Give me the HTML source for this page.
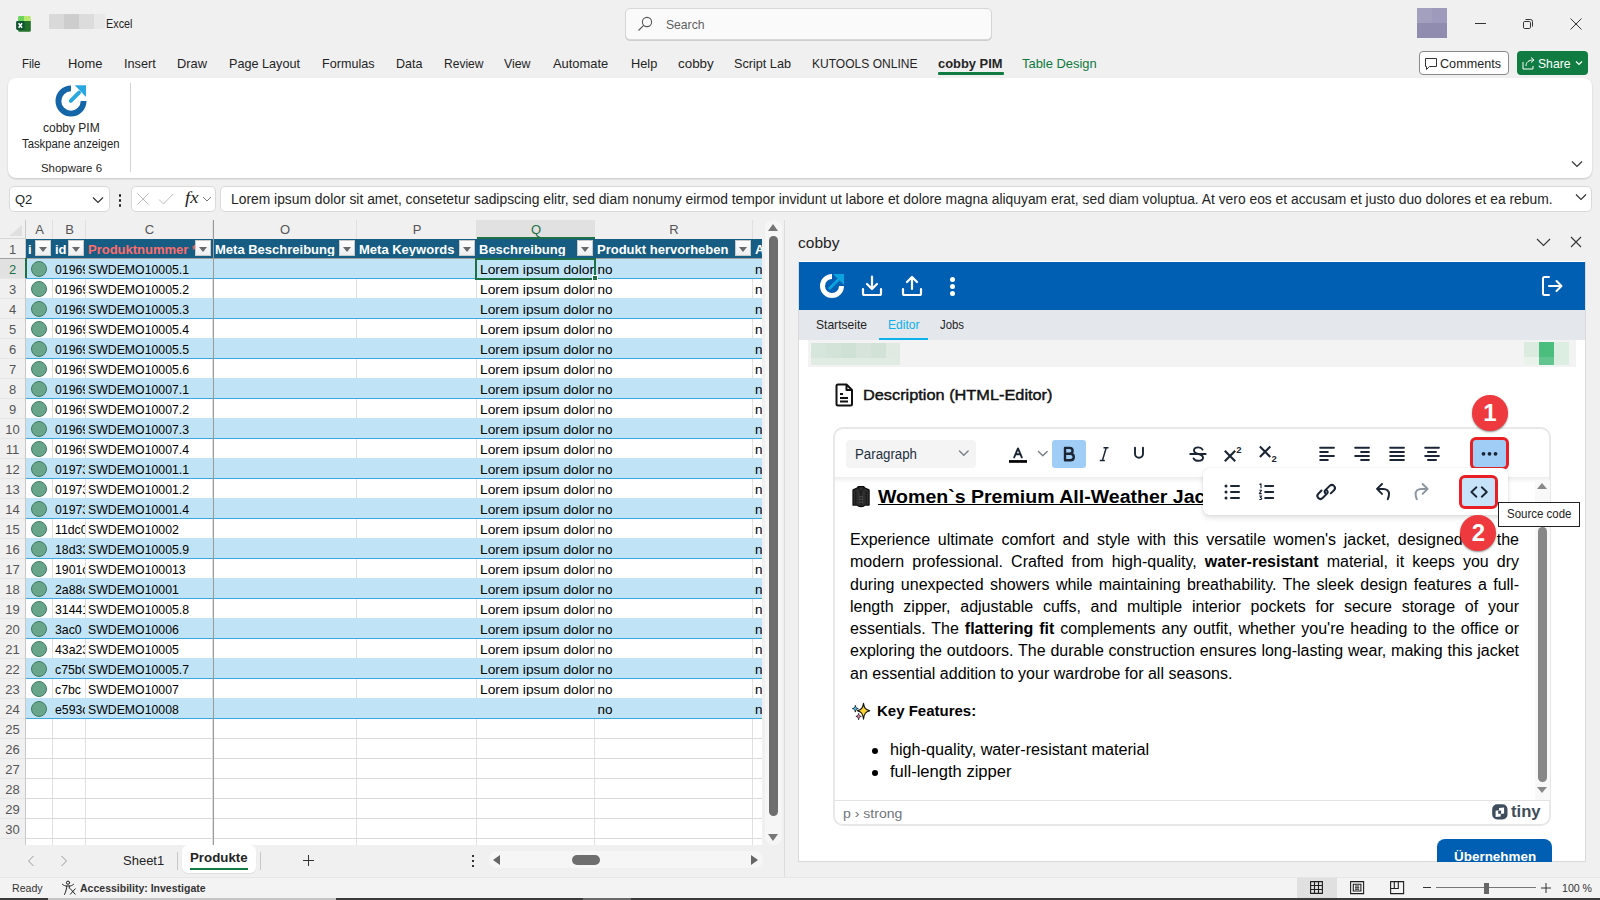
<!DOCTYPE html>
<html><head><meta charset="utf-8">
<style>
*{box-sizing:border-box;margin:0;padding:0}
html,body{width:1600px;height:900px;overflow:hidden;background:#f0f0f0;font-family:"Liberation Sans",sans-serif;color:#242424}
.a{position:absolute}
.t{position:absolute;white-space:nowrap;line-height:1;transform-origin:0 0;transform:scaleX(var(--k,1))}
</style></head><body>
<!-- TITLE BAR -->
<div id="title">
  <svg class="a" style="left:0;top:0" width="40" height="40" viewBox="0 0 40 40"><path d="M18.1 17.3a1.4 1.4 0 0 1 1.4-1.4H24v5H18.1z" fill="#6bd35e"/><path d="M24 15.9h5.4a1.4 1.4 0 0 1 1.4 1.4v3.6H24z" fill="#b8e86c"/><path d="M18.1 20.9h12.7v9.5a1.4 1.4 0 0 1-1.4 1.4h-9.9a1.4 1.4 0 0 1-1.4-1.4z" fill="#21712b"/><rect x="16.1" y="20.9" width="8.5" height="9" rx="1.3" fill="#0f5532"/><path d="M18.6 23.2l3.5 4.6M22.1 23.2l-3.5 4.6" stroke="#fff" stroke-width="1.5"/></svg>
  <div class="a" style="left:49px;top:14px;width:15px;height:15px;background:#d9d9d9"></div>
  <div class="a" style="left:64px;top:14px;width:15px;height:15px;background:#cdcdcd"></div>
  <div class="a" style="left:79px;top:14px;width:15px;height:15px;background:#dcdcdc"></div>
  <div class="a" style="left:94px;top:14px;width:11px;height:15px;background:#e8e8e8"></div>
  <div class="t" style="left:106px;top:18px;font-size:12.5px;--k:0.8666">Excel</div>
  <div class="a" style="left:625px;top:8px;width:367px;height:32px;background:#fafafa;border:1px solid #d6d6d6;border-radius:5px;box-shadow:0 1px 0 #cfcfcf"></div>
  <svg class="a" style="left:637px;top:16px" width="16" height="16" viewBox="0 0 16 16"><circle cx="10" cy="6" r="4.6" fill="none" stroke="#555" stroke-width="1.1"/><line x1="6.7" y1="9.3" x2="1.5" y2="14.5" stroke="#555" stroke-width="1.1"/></svg>
  <div class="t" style="left:666px;top:18px;font-size:13px;color:#5f5f5f;--k:0.9344">Search</div>
  <div class="a" style="left:1417px;top:8px;width:15px;height:15px;background:#a39fbf"></div>
  <div class="a" style="left:1432px;top:8px;width:15px;height:15px;background:#9e9abb"></div>
  <div class="a" style="left:1417px;top:23px;width:30px;height:15px;background:#908cb0"></div>
  <div class="a" style="left:1475px;top:23px;width:11px;height:1px;background:#333"></div>
  <svg class="a" style="left:1521px;top:17px" width="14" height="14" viewBox="0 0 14 14"><rect x="2.5" y="4.5" width="7" height="7" rx="1.2" fill="none" stroke="#333" stroke-width="1"/><path d="M4.5 2.5h5a2 2 0 0 1 2 2v5" fill="none" stroke="#333" stroke-width="1"/></svg>
  <svg class="a" style="left:1569px;top:17px" width="14" height="14" viewBox="0 0 14 14"><path d="M1.5 1.5l11 11M12.5 1.5l-11 11" stroke="#333" stroke-width="1"/></svg>
</div>

<!-- TABS -->
<div id="tabs">
  <div class="t" style="left:22px;top:57px;font-size:13px;--k:0.8829">File</div>
  <div class="t" style="left:68px;top:57px;font-size:13px;--k:0.9946">Home</div>
  <div class="t" style="left:124px;top:57px;font-size:13px;--k:0.9765">Insert</div>
  <div class="t" style="left:177px;top:57px;font-size:13px;--k:0.9887">Draw</div>
  <div class="t" style="left:229px;top:57px;font-size:13px;--k:0.9724">Page Layout</div>
  <div class="t" style="left:322px;top:57px;font-size:13px;--k:0.9689">Formulas</div>
  <div class="t" style="left:396px;top:57px;font-size:13px;--k:0.9647">Data</div>
  <div class="t" style="left:444px;top:57px;font-size:13px;--k:0.9267">Review</div>
  <div class="t" style="left:504px;top:57px;font-size:13px;--k:0.9480">View</div>
  <div class="t" style="left:553px;top:57px;font-size:13px;--k:0.9927">Automate</div>
  <div class="t" style="left:631px;top:57px;font-size:13px;--k:0.9813">Help</div>
  <div class="t" style="left:678px;top:57px;font-size:13px;--k:1.0302">cobby</div>
  <div class="t" style="left:734px;top:57px;font-size:13px;--k:0.9736">Script Lab</div>
  <div class="t" style="left:812px;top:57px;font-size:13px;--k:0.9262">KUTOOLS ONLINE</div>
  <div class="t" style="left:938px;top:57px;font-size:13px;font-weight:bold;--k:0.9921">cobby PIM</div>
  <div class="a" style="left:938px;top:72px;width:66px;height:3px;background:#107c41;border-radius:1px"></div>
  <div class="t" style="left:1022px;top:57px;font-size:13px;color:#0e7a3c;--k:0.9946">Table Design</div>
  <div class="a" style="left:1419px;top:51px;width:90px;height:24px;border:1px solid #8a8a8a;border-radius:4px;background:#fff"></div>
  <svg class="a" style="left:1424px;top:57px" width="14" height="14" viewBox="0 0 14 14"><path d="M1.5 1.5h11v8h-7l-3 3v-3h-1z" fill="none" stroke="#333" stroke-width="1"/></svg>
  <div class="t" style="left:1440px;top:57px;font-size:13px;--k:0.9704">Comments</div>
  <div class="a" style="left:1517px;top:51px;width:71px;height:24px;border-radius:4px;background:#107c41"></div>
  <svg class="a" style="left:1521px;top:56px" width="15" height="15" viewBox="0 0 15 15"><path d="M2 6v7h10v-3" fill="none" stroke="#fff" stroke-width="1"/><path d="M5 10c0-4 3-6 7-6M10 1.5l3 2.5-3 2.5" fill="none" stroke="#fff" stroke-width="1"/></svg>
  <div class="t" style="left:1538px;top:57px;font-size:13px;color:#fff;--k:0.9365">Share</div>
  <svg class="a" style="left:1575px;top:60px" width="8" height="6" viewBox="0 0 8 6"><path d="M1 1.5l3 3 3-3" fill="none" stroke="#fff" stroke-width="1.2"/></svg>
</div>

<!-- RIBBON BODY -->
<div class="a" style="left:8px;top:78px;width:1584px;height:100px;background:#fff;border-radius:8px;box-shadow:0 1px 2px rgba(0,0,0,.18)"></div>
<div class="a" style="left:130px;top:83px;width:1px;height:89px;background:#d2d2d2"></div>
<svg class="a" style="left:54px;top:84px" width="34" height="34" viewBox="0 0 34 34">
  <path d="M17 4.4 A12.6 12.6 0 1 0 29.6 17" fill="none" stroke="#1565a9" stroke-width="5.8"/>
  <path d="M16.8 16.8 L25 8.6" stroke="#29a7e1" stroke-width="4" stroke-linecap="round"/>
  <path d="M20.8 1.3 H32 V13 Z" fill="#29a7e1"/>
</svg>
<div class="t" style="left:43px;top:122px;font-size:12px">cobby PIM</div>
<div class="t" style="left:22px;top:138px;font-size:12px;--k:0.9427">Taskpane anzeigen</div>
<div class="t" style="left:41px;top:163px;font-size:11px;--k:1.0389">Shopware 6</div>
<svg class="a" style="left:1571px;top:159px" width="12" height="10" viewBox="0 0 12 10"><path d="M1 2.5l5 5 5-5" fill="none" stroke="#333" stroke-width="1.2"/></svg>

<!-- FORMULA BAR -->
<div class="a" style="left:9px;top:186px;width:101px;height:26px;background:#fff;border:1px solid #d9d9d9;border-radius:5px"></div>
<div class="t" style="left:15px;top:193px;font-size:13px">Q2</div>
<svg class="a" style="left:92px;top:195px" width="12" height="10" viewBox="0 0 12 10"><path d="M1 2.5l5 5 5-5" fill="none" stroke="#333" stroke-width="1.2"/></svg>
<div class="a" style="left:118.8px;top:194px;width:2.6px;height:2.6px;background:#222;border-radius:50%"></div>
<div class="a" style="left:118.8px;top:199px;width:2.6px;height:2.6px;background:#222;border-radius:50%"></div>
<div class="a" style="left:118.8px;top:204px;width:2.6px;height:2.6px;background:#222;border-radius:50%"></div>
<div class="a" style="left:131px;top:186px;width:85px;height:26px;background:#fff;border:1px solid #d9d9d9;border-radius:5px"></div>
<svg class="a" style="left:136px;top:192px" width="14" height="14" viewBox="0 0 14 14"><path d="M1.5 1.5l11 11M12.5 1.5l-11 11" stroke="#bdbdbd" stroke-width="1"/></svg>
<svg class="a" style="left:158px;top:192px" width="16" height="14" viewBox="0 0 16 14"><path d="M1 7.5l4.5 4.5L15 2" fill="none" stroke="#bdbdbd" stroke-width="1"/></svg>
<div class="t" style="left:184.5px;top:189px;font-size:17.5px;font-family:'Liberation Serif',serif;font-style:italic;color:#222;--k:1.0680">fx</div>
<svg class="a" style="left:202px;top:195px" width="10" height="8" viewBox="0 0 10 8"><path d="M1 2l4 4 4-4" fill="none" stroke="#777" stroke-width="1"/></svg>
<div class="a" style="left:220px;top:186px;width:1372px;height:26px;background:#fff;border:1px solid #d9d9d9;border-radius:5px"></div>
<div class="t" style="left:231px;top:192px;font-size:14px;--k:0.9885">Lorem ipsum dolor sit amet, consetetur sadipscing elitr, sed diam nonumy eirmod tempor invidunt ut labore et dolore magna aliquyam erat, sed diam voluptua. At vero eos et accusam et justo duo dolores et ea rebum.</div>
<svg class="a" style="left:1575px;top:192px" width="12" height="10" viewBox="0 0 12 10"><path d="M1 2.5l5 5 5-5" fill="none" stroke="#333" stroke-width="1.2"/></svg>


<div class="a" style="left:0;top:220px;width:762px;height:625px;overflow:hidden;background:#fff">
<div class="a" style="left:0;top:0;width:762px;height:19px;background:#f0f0f0"></div>
<div class="a" style="left:0;top:0;width:25px;height:625px;background:#f0f0f0"></div>
<svg class="a" style="left:9px;top:5px" width="13" height="11" viewBox="0 0 13 11"><path d="M13 0V11H0Z" fill="#e0e0e0"/></svg>
<div class="a" style="left:26px;top:0;width:27px;height:19px;background:transparent;border-right:1px solid #e0e0e0"></div>
<div class="t" style="left:26px;top:3px;width:27px;text-align:center;font-size:13px;color:#555">A</div>
<div class="a" style="left:53px;top:0;width:33px;height:19px;background:transparent;border-right:1px solid #e0e0e0"></div>
<div class="t" style="left:53px;top:3px;width:33px;text-align:center;font-size:13px;color:#555">B</div>
<div class="a" style="left:86px;top:0;width:127px;height:19px;background:transparent;border-right:1px solid #e0e0e0"></div>
<div class="t" style="left:86px;top:3px;width:127px;text-align:center;font-size:13px;color:#555">C</div>
<div class="a" style="left:213px;top:0;width:144px;height:19px;background:transparent;border-right:1px solid #e0e0e0"></div>
<div class="t" style="left:213px;top:3px;width:144px;text-align:center;font-size:13px;color:#555">O</div>
<div class="a" style="left:357px;top:0;width:120px;height:19px;background:transparent;border-right:1px solid #e0e0e0"></div>
<div class="t" style="left:357px;top:3px;width:120px;text-align:center;font-size:13px;color:#555">P</div>
<div class="a" style="left:477px;top:0;width:118px;height:19px;background:#e1e1e1;border-right:1px solid #e0e0e0"></div>
<div class="t" style="left:477px;top:3px;width:118px;text-align:center;font-size:13px;color:#1e7145">Q</div>
<div class="a" style="left:595px;top:0;width:158px;height:19px;background:transparent;border-right:1px solid #e0e0e0"></div>
<div class="t" style="left:595px;top:3px;width:158px;text-align:center;font-size:13px;color:#555">R</div>
<div class="a" style="left:753px;top:0;width:77px;height:19px;background:transparent;border-right:1px solid #e0e0e0"></div>
<div class="t" style="left:753px;top:3px;width:77px;text-align:center;font-size:13px;color:#555"></div>
<div class="a" style="left:477px;top:17px;width:118px;height:2px;background:#1e7145"></div>
<div class="a" style="left:0;top:18px;width:25px;height:1px;background:#d8d8d8"></div>
<div class="a" style="left:0;top:19px;width:25px;height:20px;background:#f0f0f0;border-bottom:1px solid #e6e6e6"></div>
<div class="t" style="left:0;top:23px;width:25px;text-align:center;font-size:13px;color:#555">1</div>
<div class="a" style="left:0;top:39px;width:25px;height:20px;background:#e1e1e1;border-bottom:1px solid #e6e6e6"></div>
<div class="t" style="left:0;top:43px;width:25px;text-align:center;font-size:13px;color:#1e7145">2</div>
<div class="a" style="left:0;top:59px;width:25px;height:20px;background:#f0f0f0;border-bottom:1px solid #e6e6e6"></div>
<div class="t" style="left:0;top:63px;width:25px;text-align:center;font-size:13px;color:#555">3</div>
<div class="a" style="left:0;top:79px;width:25px;height:20px;background:#f0f0f0;border-bottom:1px solid #e6e6e6"></div>
<div class="t" style="left:0;top:83px;width:25px;text-align:center;font-size:13px;color:#555">4</div>
<div class="a" style="left:0;top:99px;width:25px;height:20px;background:#f0f0f0;border-bottom:1px solid #e6e6e6"></div>
<div class="t" style="left:0;top:103px;width:25px;text-align:center;font-size:13px;color:#555">5</div>
<div class="a" style="left:0;top:119px;width:25px;height:20px;background:#f0f0f0;border-bottom:1px solid #e6e6e6"></div>
<div class="t" style="left:0;top:123px;width:25px;text-align:center;font-size:13px;color:#555">6</div>
<div class="a" style="left:0;top:139px;width:25px;height:20px;background:#f0f0f0;border-bottom:1px solid #e6e6e6"></div>
<div class="t" style="left:0;top:143px;width:25px;text-align:center;font-size:13px;color:#555">7</div>
<div class="a" style="left:0;top:159px;width:25px;height:20px;background:#f0f0f0;border-bottom:1px solid #e6e6e6"></div>
<div class="t" style="left:0;top:163px;width:25px;text-align:center;font-size:13px;color:#555">8</div>
<div class="a" style="left:0;top:179px;width:25px;height:20px;background:#f0f0f0;border-bottom:1px solid #e6e6e6"></div>
<div class="t" style="left:0;top:183px;width:25px;text-align:center;font-size:13px;color:#555">9</div>
<div class="a" style="left:0;top:199px;width:25px;height:20px;background:#f0f0f0;border-bottom:1px solid #e6e6e6"></div>
<div class="t" style="left:0;top:203px;width:25px;text-align:center;font-size:13px;color:#555">10</div>
<div class="a" style="left:0;top:219px;width:25px;height:20px;background:#f0f0f0;border-bottom:1px solid #e6e6e6"></div>
<div class="t" style="left:0;top:223px;width:25px;text-align:center;font-size:13px;color:#555">11</div>
<div class="a" style="left:0;top:239px;width:25px;height:20px;background:#f0f0f0;border-bottom:1px solid #e6e6e6"></div>
<div class="t" style="left:0;top:243px;width:25px;text-align:center;font-size:13px;color:#555">12</div>
<div class="a" style="left:0;top:259px;width:25px;height:20px;background:#f0f0f0;border-bottom:1px solid #e6e6e6"></div>
<div class="t" style="left:0;top:263px;width:25px;text-align:center;font-size:13px;color:#555">13</div>
<div class="a" style="left:0;top:279px;width:25px;height:20px;background:#f0f0f0;border-bottom:1px solid #e6e6e6"></div>
<div class="t" style="left:0;top:283px;width:25px;text-align:center;font-size:13px;color:#555">14</div>
<div class="a" style="left:0;top:299px;width:25px;height:20px;background:#f0f0f0;border-bottom:1px solid #e6e6e6"></div>
<div class="t" style="left:0;top:303px;width:25px;text-align:center;font-size:13px;color:#555">15</div>
<div class="a" style="left:0;top:319px;width:25px;height:20px;background:#f0f0f0;border-bottom:1px solid #e6e6e6"></div>
<div class="t" style="left:0;top:323px;width:25px;text-align:center;font-size:13px;color:#555">16</div>
<div class="a" style="left:0;top:339px;width:25px;height:20px;background:#f0f0f0;border-bottom:1px solid #e6e6e6"></div>
<div class="t" style="left:0;top:343px;width:25px;text-align:center;font-size:13px;color:#555">17</div>
<div class="a" style="left:0;top:359px;width:25px;height:20px;background:#f0f0f0;border-bottom:1px solid #e6e6e6"></div>
<div class="t" style="left:0;top:363px;width:25px;text-align:center;font-size:13px;color:#555">18</div>
<div class="a" style="left:0;top:379px;width:25px;height:20px;background:#f0f0f0;border-bottom:1px solid #e6e6e6"></div>
<div class="t" style="left:0;top:383px;width:25px;text-align:center;font-size:13px;color:#555">19</div>
<div class="a" style="left:0;top:399px;width:25px;height:20px;background:#f0f0f0;border-bottom:1px solid #e6e6e6"></div>
<div class="t" style="left:0;top:403px;width:25px;text-align:center;font-size:13px;color:#555">20</div>
<div class="a" style="left:0;top:419px;width:25px;height:20px;background:#f0f0f0;border-bottom:1px solid #e6e6e6"></div>
<div class="t" style="left:0;top:423px;width:25px;text-align:center;font-size:13px;color:#555">21</div>
<div class="a" style="left:0;top:439px;width:25px;height:20px;background:#f0f0f0;border-bottom:1px solid #e6e6e6"></div>
<div class="t" style="left:0;top:443px;width:25px;text-align:center;font-size:13px;color:#555">22</div>
<div class="a" style="left:0;top:459px;width:25px;height:20px;background:#f0f0f0;border-bottom:1px solid #e6e6e6"></div>
<div class="t" style="left:0;top:463px;width:25px;text-align:center;font-size:13px;color:#555">23</div>
<div class="a" style="left:0;top:479px;width:25px;height:20px;background:#f0f0f0;border-bottom:1px solid #e6e6e6"></div>
<div class="t" style="left:0;top:483px;width:25px;text-align:center;font-size:13px;color:#555">24</div>
<div class="a" style="left:0;top:499px;width:25px;height:20px;background:#f0f0f0;border-bottom:1px solid #e6e6e6"></div>
<div class="t" style="left:0;top:503px;width:25px;text-align:center;font-size:13px;color:#555">25</div>
<div class="a" style="left:0;top:519px;width:25px;height:20px;background:#f0f0f0;border-bottom:1px solid #e6e6e6"></div>
<div class="t" style="left:0;top:523px;width:25px;text-align:center;font-size:13px;color:#555">26</div>
<div class="a" style="left:0;top:539px;width:25px;height:20px;background:#f0f0f0;border-bottom:1px solid #e6e6e6"></div>
<div class="t" style="left:0;top:543px;width:25px;text-align:center;font-size:13px;color:#555">27</div>
<div class="a" style="left:0;top:559px;width:25px;height:20px;background:#f0f0f0;border-bottom:1px solid #e6e6e6"></div>
<div class="t" style="left:0;top:563px;width:25px;text-align:center;font-size:13px;color:#555">28</div>
<div class="a" style="left:0;top:579px;width:25px;height:20px;background:#f0f0f0;border-bottom:1px solid #e6e6e6"></div>
<div class="t" style="left:0;top:583px;width:25px;text-align:center;font-size:13px;color:#555">29</div>
<div class="a" style="left:0;top:599px;width:25px;height:20px;background:#f0f0f0;border-bottom:1px solid #e6e6e6"></div>
<div class="t" style="left:0;top:603px;width:25px;text-align:center;font-size:13px;color:#555">30</div>
<div class="a" style="left:0;top:619px;width:25px;height:20px;background:#f0f0f0;border-bottom:1px solid #e6e6e6"></div>
<div class="t" style="left:0;top:623px;width:25px;text-align:center;font-size:13px;color:#555">31</div>
<div class="a" style="left:52px;top:19px;width:1px;height:625px;background:#e0e0e0"></div>
<div class="a" style="left:85px;top:19px;width:1px;height:625px;background:#e0e0e0"></div>
<div class="a" style="left:212px;top:19px;width:1px;height:625px;background:#e0e0e0"></div>
<div class="a" style="left:356px;top:19px;width:1px;height:625px;background:#e0e0e0"></div>
<div class="a" style="left:476px;top:19px;width:1px;height:625px;background:#e0e0e0"></div>
<div class="a" style="left:594px;top:19px;width:1px;height:625px;background:#e0e0e0"></div>
<div class="a" style="left:752px;top:19px;width:1px;height:625px;background:#e0e0e0"></div>
<div class="a" style="left:26px;top:19px;width:736px;height:19px;background:#175d83"></div>
<div class="a" style="left:26px;top:38px;width:736px;height:20px;background:#c0e4f5"></div>
<div class="a" style="left:26px;top:58px;width:736px;height:1px;background:#3fa6df"></div>
<div class="a" style="left:26px;top:78px;width:736px;height:1px;background:#3fa6df"></div>
<div class="a" style="left:26px;top:78px;width:736px;height:20px;background:#c0e4f5"></div>
<div class="a" style="left:26px;top:98px;width:736px;height:1px;background:#3fa6df"></div>
<div class="a" style="left:26px;top:118px;width:736px;height:1px;background:#3fa6df"></div>
<div class="a" style="left:26px;top:118px;width:736px;height:20px;background:#c0e4f5"></div>
<div class="a" style="left:26px;top:138px;width:736px;height:1px;background:#3fa6df"></div>
<div class="a" style="left:26px;top:158px;width:736px;height:1px;background:#3fa6df"></div>
<div class="a" style="left:26px;top:158px;width:736px;height:20px;background:#c0e4f5"></div>
<div class="a" style="left:26px;top:178px;width:736px;height:1px;background:#3fa6df"></div>
<div class="a" style="left:26px;top:198px;width:736px;height:1px;background:#3fa6df"></div>
<div class="a" style="left:26px;top:198px;width:736px;height:20px;background:#c0e4f5"></div>
<div class="a" style="left:26px;top:218px;width:736px;height:1px;background:#3fa6df"></div>
<div class="a" style="left:26px;top:238px;width:736px;height:1px;background:#3fa6df"></div>
<div class="a" style="left:26px;top:238px;width:736px;height:20px;background:#c0e4f5"></div>
<div class="a" style="left:26px;top:258px;width:736px;height:1px;background:#3fa6df"></div>
<div class="a" style="left:26px;top:278px;width:736px;height:1px;background:#3fa6df"></div>
<div class="a" style="left:26px;top:278px;width:736px;height:20px;background:#c0e4f5"></div>
<div class="a" style="left:26px;top:298px;width:736px;height:1px;background:#3fa6df"></div>
<div class="a" style="left:26px;top:318px;width:736px;height:1px;background:#3fa6df"></div>
<div class="a" style="left:26px;top:318px;width:736px;height:20px;background:#c0e4f5"></div>
<div class="a" style="left:26px;top:338px;width:736px;height:1px;background:#3fa6df"></div>
<div class="a" style="left:26px;top:358px;width:736px;height:1px;background:#3fa6df"></div>
<div class="a" style="left:26px;top:358px;width:736px;height:20px;background:#c0e4f5"></div>
<div class="a" style="left:26px;top:378px;width:736px;height:1px;background:#3fa6df"></div>
<div class="a" style="left:26px;top:398px;width:736px;height:1px;background:#3fa6df"></div>
<div class="a" style="left:26px;top:398px;width:736px;height:20px;background:#c0e4f5"></div>
<div class="a" style="left:26px;top:418px;width:736px;height:1px;background:#3fa6df"></div>
<div class="a" style="left:26px;top:438px;width:736px;height:1px;background:#3fa6df"></div>
<div class="a" style="left:26px;top:438px;width:736px;height:20px;background:#c0e4f5"></div>
<div class="a" style="left:26px;top:458px;width:736px;height:1px;background:#3fa6df"></div>
<div class="a" style="left:26px;top:478px;width:736px;height:1px;background:#3fa6df"></div>
<div class="a" style="left:26px;top:478px;width:736px;height:20px;background:#c0e4f5"></div>
<div class="a" style="left:26px;top:498px;width:736px;height:1px;background:#3fa6df"></div>
<div class="a" style="left:26px;top:518px;width:736px;height:1px;background:#dadada"></div>
<div class="a" style="left:26px;top:538px;width:736px;height:1px;background:#dadada"></div>
<div class="a" style="left:26px;top:558px;width:736px;height:1px;background:#dadada"></div>
<div class="a" style="left:26px;top:578px;width:736px;height:1px;background:#dadada"></div>
<div class="a" style="left:26px;top:598px;width:736px;height:1px;background:#dadada"></div>
<div class="a" style="left:26px;top:618px;width:736px;height:1px;background:#dadada"></div>
<div class="a" style="left:26px;top:638px;width:736px;height:1px;background:#dadada"></div>
<div class="a" style="left:25px;top:0;width:1px;height:625px;background:#c8c8c8"></div>
<div class="a" style="left:213px;top:0;width:1px;height:625px;background:#9a9a9a"></div>
<div class="a" style="left:0;top:38px;width:762px;height:1px;background:#a0a0a0"></div>
<div class="t" style="left:28px;top:23px;width:7px;overflow:hidden;font-size:13px;font-weight:bold;color:#fff">i</div>
<div class="a" style="left:35px;top:20px;width:16px;height:16px;background:linear-gradient(#fff,#eceef0);border:1px solid #c9c9c9"></div>
<svg class="a" style="left:39px;top:27px" width="8" height="5" viewBox="0 0 8 5"><path d="M0 0h8L4 5z" fill="#6a6a6a"/></svg>
<div class="t" style="left:55px;top:23px;width:13px;overflow:hidden;font-size:13px;font-weight:bold;color:#fff">id</div>
<div class="a" style="left:68px;top:20px;width:16px;height:16px;background:linear-gradient(#fff,#eceef0);border:1px solid #c9c9c9"></div>
<svg class="a" style="left:72px;top:27px" width="8" height="5" viewBox="0 0 8 5"><path d="M0 0h8L4 5z" fill="#6a6a6a"/></svg>
<div class="t" style="left:88px;top:23px;width:107px;overflow:hidden;font-size:13px;font-weight:bold;color:#ff6b6b">Produktnummer *</div>
<div class="a" style="left:195px;top:20px;width:16px;height:16px;background:linear-gradient(#fff,#eceef0);border:1px solid #c9c9c9"></div>
<svg class="a" style="left:199px;top:27px" width="8" height="5" viewBox="0 0 8 5"><path d="M0 0h8L4 5z" fill="#6a6a6a"/></svg>
<div class="t" style="left:215px;top:23px;width:124px;overflow:hidden;font-size:13px;font-weight:bold;color:#fff">Meta Beschreibung</div>
<div class="a" style="left:339px;top:20px;width:16px;height:16px;background:linear-gradient(#fff,#eceef0);border:1px solid #c9c9c9"></div>
<svg class="a" style="left:343px;top:27px" width="8" height="5" viewBox="0 0 8 5"><path d="M0 0h8L4 5z" fill="#6a6a6a"/></svg>
<div class="t" style="left:359px;top:23px;width:100px;overflow:hidden;font-size:13px;font-weight:bold;color:#fff">Meta Keywords</div>
<div class="a" style="left:459px;top:20px;width:16px;height:16px;background:linear-gradient(#fff,#eceef0);border:1px solid #c9c9c9"></div>
<svg class="a" style="left:463px;top:27px" width="8" height="5" viewBox="0 0 8 5"><path d="M0 0h8L4 5z" fill="#6a6a6a"/></svg>
<div class="t" style="left:479px;top:23px;width:98px;overflow:hidden;font-size:13px;font-weight:bold;color:#fff">Beschreibung</div>
<div class="a" style="left:577px;top:20px;width:16px;height:16px;background:linear-gradient(#fff,#eceef0);border:1px solid #c9c9c9"></div>
<svg class="a" style="left:581px;top:27px" width="8" height="5" viewBox="0 0 8 5"><path d="M0 0h8L4 5z" fill="#6a6a6a"/></svg>
<div class="t" style="left:597px;top:23px;width:138px;overflow:hidden;font-size:13px;font-weight:bold;color:#fff">Produkt hervorheben</div>
<div class="a" style="left:735px;top:20px;width:16px;height:16px;background:linear-gradient(#fff,#eceef0);border:1px solid #c9c9c9"></div>
<svg class="a" style="left:739px;top:27px" width="8" height="5" viewBox="0 0 8 5"><path d="M0 0h8L4 5z" fill="#6a6a6a"/></svg>
<div class="t" style="left:755px;top:23px;width:57px;overflow:hidden;font-size:13px;font-weight:bold;color:#fff">A</div>
<div class="a" style="left:31px;top:41px;width:16px;height:16px;border-radius:50%;background:#69a58a;border:1px solid #3f7d62"></div>
<div class="t" style="left:55px;top:42.5px;width:33px;overflow:hidden;font-size:13.5px;color:#000;--k:0.91">01969</div>
<div class="t" style="left:88px;top:42.5px;font-size:13.5px;color:#000;--k:0.91">SWDEMO10005.1</div>
<div class="t" style="left:479.5px;top:42.5px;width:112.5px;overflow:hidden;font-size:13.5px;color:#000;--k:1.02">Lorem ipsum dolor</div>
<div class="t" style="left:597.5px;top:42.5px;font-size:13.5px;color:#000">no</div>
<div class="t" style="left:755px;top:42.5px;font-size:13.5px;color:#000">no</div>
<div class="a" style="left:31px;top:61px;width:16px;height:16px;border-radius:50%;background:#69a58a;border:1px solid #3f7d62"></div>
<div class="t" style="left:55px;top:62.5px;width:33px;overflow:hidden;font-size:13.5px;color:#000;--k:0.91">01969</div>
<div class="t" style="left:88px;top:62.5px;font-size:13.5px;color:#000;--k:0.91">SWDEMO10005.2</div>
<div class="t" style="left:479.5px;top:62.5px;width:112.5px;overflow:hidden;font-size:13.5px;color:#000;--k:1.02">Lorem ipsum dolor</div>
<div class="t" style="left:597.5px;top:62.5px;font-size:13.5px;color:#000">no</div>
<div class="t" style="left:755px;top:62.5px;font-size:13.5px;color:#000">no</div>
<div class="a" style="left:31px;top:81px;width:16px;height:16px;border-radius:50%;background:#69a58a;border:1px solid #3f7d62"></div>
<div class="t" style="left:55px;top:82.5px;width:33px;overflow:hidden;font-size:13.5px;color:#000;--k:0.91">01969</div>
<div class="t" style="left:88px;top:82.5px;font-size:13.5px;color:#000;--k:0.91">SWDEMO10005.3</div>
<div class="t" style="left:479.5px;top:82.5px;width:112.5px;overflow:hidden;font-size:13.5px;color:#000;--k:1.02">Lorem ipsum dolor</div>
<div class="t" style="left:597.5px;top:82.5px;font-size:13.5px;color:#000">no</div>
<div class="t" style="left:755px;top:82.5px;font-size:13.5px;color:#000">no</div>
<div class="a" style="left:31px;top:101px;width:16px;height:16px;border-radius:50%;background:#69a58a;border:1px solid #3f7d62"></div>
<div class="t" style="left:55px;top:102.5px;width:33px;overflow:hidden;font-size:13.5px;color:#000;--k:0.91">01969</div>
<div class="t" style="left:88px;top:102.5px;font-size:13.5px;color:#000;--k:0.91">SWDEMO10005.4</div>
<div class="t" style="left:479.5px;top:102.5px;width:112.5px;overflow:hidden;font-size:13.5px;color:#000;--k:1.02">Lorem ipsum dolor</div>
<div class="t" style="left:597.5px;top:102.5px;font-size:13.5px;color:#000">no</div>
<div class="t" style="left:755px;top:102.5px;font-size:13.5px;color:#000">no</div>
<div class="a" style="left:31px;top:121px;width:16px;height:16px;border-radius:50%;background:#69a58a;border:1px solid #3f7d62"></div>
<div class="t" style="left:55px;top:122.5px;width:33px;overflow:hidden;font-size:13.5px;color:#000;--k:0.91">01969</div>
<div class="t" style="left:88px;top:122.5px;font-size:13.5px;color:#000;--k:0.91">SWDEMO10005.5</div>
<div class="t" style="left:479.5px;top:122.5px;width:112.5px;overflow:hidden;font-size:13.5px;color:#000;--k:1.02">Lorem ipsum dolor</div>
<div class="t" style="left:597.5px;top:122.5px;font-size:13.5px;color:#000">no</div>
<div class="t" style="left:755px;top:122.5px;font-size:13.5px;color:#000">no</div>
<div class="a" style="left:31px;top:141px;width:16px;height:16px;border-radius:50%;background:#69a58a;border:1px solid #3f7d62"></div>
<div class="t" style="left:55px;top:142.5px;width:33px;overflow:hidden;font-size:13.5px;color:#000;--k:0.91">01969</div>
<div class="t" style="left:88px;top:142.5px;font-size:13.5px;color:#000;--k:0.91">SWDEMO10005.6</div>
<div class="t" style="left:479.5px;top:142.5px;width:112.5px;overflow:hidden;font-size:13.5px;color:#000;--k:1.02">Lorem ipsum dolor</div>
<div class="t" style="left:597.5px;top:142.5px;font-size:13.5px;color:#000">no</div>
<div class="t" style="left:755px;top:142.5px;font-size:13.5px;color:#000">no</div>
<div class="a" style="left:31px;top:161px;width:16px;height:16px;border-radius:50%;background:#69a58a;border:1px solid #3f7d62"></div>
<div class="t" style="left:55px;top:162.5px;width:33px;overflow:hidden;font-size:13.5px;color:#000;--k:0.91">01969</div>
<div class="t" style="left:88px;top:162.5px;font-size:13.5px;color:#000;--k:0.91">SWDEMO10007.1</div>
<div class="t" style="left:479.5px;top:162.5px;width:112.5px;overflow:hidden;font-size:13.5px;color:#000;--k:1.02">Lorem ipsum dolor</div>
<div class="t" style="left:597.5px;top:162.5px;font-size:13.5px;color:#000">no</div>
<div class="t" style="left:755px;top:162.5px;font-size:13.5px;color:#000">no</div>
<div class="a" style="left:31px;top:181px;width:16px;height:16px;border-radius:50%;background:#69a58a;border:1px solid #3f7d62"></div>
<div class="t" style="left:55px;top:182.5px;width:33px;overflow:hidden;font-size:13.5px;color:#000;--k:0.91">01969</div>
<div class="t" style="left:88px;top:182.5px;font-size:13.5px;color:#000;--k:0.91">SWDEMO10007.2</div>
<div class="t" style="left:479.5px;top:182.5px;width:112.5px;overflow:hidden;font-size:13.5px;color:#000;--k:1.02">Lorem ipsum dolor</div>
<div class="t" style="left:597.5px;top:182.5px;font-size:13.5px;color:#000">no</div>
<div class="t" style="left:755px;top:182.5px;font-size:13.5px;color:#000">no</div>
<div class="a" style="left:31px;top:201px;width:16px;height:16px;border-radius:50%;background:#69a58a;border:1px solid #3f7d62"></div>
<div class="t" style="left:55px;top:202.5px;width:33px;overflow:hidden;font-size:13.5px;color:#000;--k:0.91">01969</div>
<div class="t" style="left:88px;top:202.5px;font-size:13.5px;color:#000;--k:0.91">SWDEMO10007.3</div>
<div class="t" style="left:479.5px;top:202.5px;width:112.5px;overflow:hidden;font-size:13.5px;color:#000;--k:1.02">Lorem ipsum dolor</div>
<div class="t" style="left:597.5px;top:202.5px;font-size:13.5px;color:#000">no</div>
<div class="t" style="left:755px;top:202.5px;font-size:13.5px;color:#000">no</div>
<div class="a" style="left:31px;top:221px;width:16px;height:16px;border-radius:50%;background:#69a58a;border:1px solid #3f7d62"></div>
<div class="t" style="left:55px;top:222.5px;width:33px;overflow:hidden;font-size:13.5px;color:#000;--k:0.91">01969</div>
<div class="t" style="left:88px;top:222.5px;font-size:13.5px;color:#000;--k:0.91">SWDEMO10007.4</div>
<div class="t" style="left:479.5px;top:222.5px;width:112.5px;overflow:hidden;font-size:13.5px;color:#000;--k:1.02">Lorem ipsum dolor</div>
<div class="t" style="left:597.5px;top:222.5px;font-size:13.5px;color:#000">no</div>
<div class="t" style="left:755px;top:222.5px;font-size:13.5px;color:#000">no</div>
<div class="a" style="left:31px;top:241px;width:16px;height:16px;border-radius:50%;background:#69a58a;border:1px solid #3f7d62"></div>
<div class="t" style="left:55px;top:242.5px;width:33px;overflow:hidden;font-size:13.5px;color:#000;--k:0.91">01973</div>
<div class="t" style="left:88px;top:242.5px;font-size:13.5px;color:#000;--k:0.91">SWDEMO10001.1</div>
<div class="t" style="left:479.5px;top:242.5px;width:112.5px;overflow:hidden;font-size:13.5px;color:#000;--k:1.02">Lorem ipsum dolor</div>
<div class="t" style="left:597.5px;top:242.5px;font-size:13.5px;color:#000">no</div>
<div class="t" style="left:755px;top:242.5px;font-size:13.5px;color:#000">no</div>
<div class="a" style="left:31px;top:261px;width:16px;height:16px;border-radius:50%;background:#69a58a;border:1px solid #3f7d62"></div>
<div class="t" style="left:55px;top:262.5px;width:33px;overflow:hidden;font-size:13.5px;color:#000;--k:0.91">01973</div>
<div class="t" style="left:88px;top:262.5px;font-size:13.5px;color:#000;--k:0.91">SWDEMO10001.2</div>
<div class="t" style="left:479.5px;top:262.5px;width:112.5px;overflow:hidden;font-size:13.5px;color:#000;--k:1.02">Lorem ipsum dolor</div>
<div class="t" style="left:597.5px;top:262.5px;font-size:13.5px;color:#000">no</div>
<div class="t" style="left:755px;top:262.5px;font-size:13.5px;color:#000">no</div>
<div class="a" style="left:31px;top:281px;width:16px;height:16px;border-radius:50%;background:#69a58a;border:1px solid #3f7d62"></div>
<div class="t" style="left:55px;top:282.5px;width:33px;overflow:hidden;font-size:13.5px;color:#000;--k:0.91">01973</div>
<div class="t" style="left:88px;top:282.5px;font-size:13.5px;color:#000;--k:0.91">SWDEMO10001.4</div>
<div class="t" style="left:479.5px;top:282.5px;width:112.5px;overflow:hidden;font-size:13.5px;color:#000;--k:1.02">Lorem ipsum dolor</div>
<div class="t" style="left:597.5px;top:282.5px;font-size:13.5px;color:#000">no</div>
<div class="t" style="left:755px;top:282.5px;font-size:13.5px;color:#000">no</div>
<div class="a" style="left:31px;top:301px;width:16px;height:16px;border-radius:50%;background:#69a58a;border:1px solid #3f7d62"></div>
<div class="t" style="left:55px;top:302.5px;width:33px;overflow:hidden;font-size:13.5px;color:#000;--k:0.91">11dc0</div>
<div class="t" style="left:88px;top:302.5px;font-size:13.5px;color:#000;--k:0.91">SWDEMO10002</div>
<div class="t" style="left:479.5px;top:302.5px;width:112.5px;overflow:hidden;font-size:13.5px;color:#000;--k:1.02">Lorem ipsum dolor</div>
<div class="t" style="left:597.5px;top:302.5px;font-size:13.5px;color:#000">no</div>
<div class="t" style="left:755px;top:302.5px;font-size:13.5px;color:#000">no</div>
<div class="a" style="left:31px;top:321px;width:16px;height:16px;border-radius:50%;background:#69a58a;border:1px solid #3f7d62"></div>
<div class="t" style="left:55px;top:322.5px;width:33px;overflow:hidden;font-size:13.5px;color:#000;--k:0.91">18d33</div>
<div class="t" style="left:88px;top:322.5px;font-size:13.5px;color:#000;--k:0.91">SWDEMO10005.9</div>
<div class="t" style="left:479.5px;top:322.5px;width:112.5px;overflow:hidden;font-size:13.5px;color:#000;--k:1.02">Lorem ipsum dolor</div>
<div class="t" style="left:597.5px;top:322.5px;font-size:13.5px;color:#000">no</div>
<div class="t" style="left:755px;top:322.5px;font-size:13.5px;color:#000">no</div>
<div class="a" style="left:31px;top:341px;width:16px;height:16px;border-radius:50%;background:#69a58a;border:1px solid #3f7d62"></div>
<div class="t" style="left:55px;top:342.5px;width:33px;overflow:hidden;font-size:13.5px;color:#000;--k:0.91">1901c</div>
<div class="t" style="left:88px;top:342.5px;font-size:13.5px;color:#000;--k:0.91">SWDEMO100013</div>
<div class="t" style="left:479.5px;top:342.5px;width:112.5px;overflow:hidden;font-size:13.5px;color:#000;--k:1.02">Lorem ipsum dolor</div>
<div class="t" style="left:597.5px;top:342.5px;font-size:13.5px;color:#000">no</div>
<div class="t" style="left:755px;top:342.5px;font-size:13.5px;color:#000">no</div>
<div class="a" style="left:31px;top:361px;width:16px;height:16px;border-radius:50%;background:#69a58a;border:1px solid #3f7d62"></div>
<div class="t" style="left:55px;top:362.5px;width:33px;overflow:hidden;font-size:13.5px;color:#000;--k:0.91">2a88c</div>
<div class="t" style="left:88px;top:362.5px;font-size:13.5px;color:#000;--k:0.91">SWDEMO10001</div>
<div class="t" style="left:479.5px;top:362.5px;width:112.5px;overflow:hidden;font-size:13.5px;color:#000;--k:1.02">Lorem ipsum dolor</div>
<div class="t" style="left:597.5px;top:362.5px;font-size:13.5px;color:#000">no</div>
<div class="t" style="left:755px;top:362.5px;font-size:13.5px;color:#000">no</div>
<div class="a" style="left:31px;top:381px;width:16px;height:16px;border-radius:50%;background:#69a58a;border:1px solid #3f7d62"></div>
<div class="t" style="left:55px;top:382.5px;width:33px;overflow:hidden;font-size:13.5px;color:#000;--k:0.91">31441</div>
<div class="t" style="left:88px;top:382.5px;font-size:13.5px;color:#000;--k:0.91">SWDEMO10005.8</div>
<div class="t" style="left:479.5px;top:382.5px;width:112.5px;overflow:hidden;font-size:13.5px;color:#000;--k:1.02">Lorem ipsum dolor</div>
<div class="t" style="left:597.5px;top:382.5px;font-size:13.5px;color:#000">no</div>
<div class="t" style="left:755px;top:382.5px;font-size:13.5px;color:#000">no</div>
<div class="a" style="left:31px;top:401px;width:16px;height:16px;border-radius:50%;background:#69a58a;border:1px solid #3f7d62"></div>
<div class="t" style="left:55px;top:402.5px;width:33px;overflow:hidden;font-size:13.5px;color:#000;--k:0.91">3ac0 </div>
<div class="t" style="left:88px;top:402.5px;font-size:13.5px;color:#000;--k:0.91">SWDEMO10006</div>
<div class="t" style="left:479.5px;top:402.5px;width:112.5px;overflow:hidden;font-size:13.5px;color:#000;--k:1.02">Lorem ipsum dolor</div>
<div class="t" style="left:597.5px;top:402.5px;font-size:13.5px;color:#000">no</div>
<div class="t" style="left:755px;top:402.5px;font-size:13.5px;color:#000">no</div>
<div class="a" style="left:31px;top:421px;width:16px;height:16px;border-radius:50%;background:#69a58a;border:1px solid #3f7d62"></div>
<div class="t" style="left:55px;top:422.5px;width:33px;overflow:hidden;font-size:13.5px;color:#000;--k:0.91">43a23</div>
<div class="t" style="left:88px;top:422.5px;font-size:13.5px;color:#000;--k:0.91">SWDEMO10005</div>
<div class="t" style="left:479.5px;top:422.5px;width:112.5px;overflow:hidden;font-size:13.5px;color:#000;--k:1.02">Lorem ipsum dolor</div>
<div class="t" style="left:597.5px;top:422.5px;font-size:13.5px;color:#000">no</div>
<div class="t" style="left:755px;top:422.5px;font-size:13.5px;color:#000">no</div>
<div class="a" style="left:31px;top:441px;width:16px;height:16px;border-radius:50%;background:#69a58a;border:1px solid #3f7d62"></div>
<div class="t" style="left:55px;top:442.5px;width:33px;overflow:hidden;font-size:13.5px;color:#000;--k:0.91">c75b0</div>
<div class="t" style="left:88px;top:442.5px;font-size:13.5px;color:#000;--k:0.91">SWDEMO10005.7</div>
<div class="t" style="left:479.5px;top:442.5px;width:112.5px;overflow:hidden;font-size:13.5px;color:#000;--k:1.02">Lorem ipsum dolor</div>
<div class="t" style="left:597.5px;top:442.5px;font-size:13.5px;color:#000">no</div>
<div class="t" style="left:755px;top:442.5px;font-size:13.5px;color:#000">no</div>
<div class="a" style="left:31px;top:461px;width:16px;height:16px;border-radius:50%;background:#69a58a;border:1px solid #3f7d62"></div>
<div class="t" style="left:55px;top:462.5px;width:33px;overflow:hidden;font-size:13.5px;color:#000;--k:0.91">c7bc </div>
<div class="t" style="left:88px;top:462.5px;font-size:13.5px;color:#000;--k:0.91">SWDEMO10007</div>
<div class="t" style="left:479.5px;top:462.5px;width:112.5px;overflow:hidden;font-size:13.5px;color:#000;--k:1.02">Lorem ipsum dolor</div>
<div class="t" style="left:597.5px;top:462.5px;font-size:13.5px;color:#000">no</div>
<div class="t" style="left:755px;top:462.5px;font-size:13.5px;color:#000">no</div>
<div class="a" style="left:31px;top:481px;width:16px;height:16px;border-radius:50%;background:#69a58a;border:1px solid #3f7d62"></div>
<div class="t" style="left:55px;top:482.5px;width:33px;overflow:hidden;font-size:13.5px;color:#000;--k:0.91">e593c</div>
<div class="t" style="left:88px;top:482.5px;font-size:13.5px;color:#000;--k:0.91">SWDEMO10008</div>
<div class="t" style="left:597.5px;top:482.5px;font-size:13.5px;color:#000">no</div>
<div class="t" style="left:755px;top:482.5px;font-size:13.5px;color:#000">no</div>
<div class="a" style="left:475px;top:38px;width:121px;height:22px;border:2px solid #1e7145"></div>
<div class="a" style="left:592px;top:55px;width:6px;height:6px;background:#1e7145;border:1px solid #fff"></div>
<div class="a" style="left:25px;top:38px;width:2px;height:20px;background:#1e7145"></div>
</div>
<div class="a" style="left:765px;top:220px;width:17px;height:625px;background:#f6f6f6;border-radius:8px"></div>
<svg class="a" style="left:768px;top:224px" width="10" height="7" viewBox="0 0 10 7"><path d="M5 0L10 7H0z" fill="#777"/></svg>
<div class="a" style="left:769px;top:236px;width:9px;height:580px;background:#6e6e6e;border-radius:5px"></div>
<svg class="a" style="left:768px;top:834px" width="10" height="7" viewBox="0 0 10 7"><path d="M0 0H10L5 7z" fill="#777"/></svg>
<div class="a" style="left:784px;top:220px;width:1px;height:657px;background:#dcdcdc"></div>
<svg class="a" style="left:27px;top:855px" width="8" height="12" viewBox="0 0 8 12"><path d="M6.5 1L1.5 6l5 5" fill="none" stroke="#999" stroke-width="1"/></svg>
<svg class="a" style="left:60px;top:855px" width="8" height="12" viewBox="0 0 8 12"><path d="M1.5 1l5 5-5 5" fill="none" stroke="#999" stroke-width="1"/></svg>
<div class="t" style="left:123px;top:854px;font-size:13px;--k:0.9999">Sheet1</div>
<div class="a" style="left:177px;top:852px;width:1px;height:18px;background:#c8c8c8"></div>
<div class="a" style="left:182px;top:845px;width:74px;height:28px;background:#fff;border-radius:6px;box-shadow:0 1px 1px rgba(0,0,0,.08)"></div>
<div class="t" style="left:190px;top:851px;font-size:13px;font-weight:bold;--k:1.0223">Produkte</div>
<div class="a" style="left:190px;top:868px;width:58px;height:2px;background:#107c41"></div>
<div class="a" style="left:260px;top:852px;width:1px;height:18px;background:#c8c8c8"></div>
<svg class="a" style="left:302px;top:854px" width="13" height="13" viewBox="0 0 13 13"><path d="M6.5 1v11M1 6.5h11" stroke="#333" stroke-width="1"/></svg>
<div class="a" style="left:472px;top:855px;width:2px;height:2px;background:#333"></div>
<div class="a" style="left:472px;top:860px;width:2px;height:2px;background:#333"></div>
<div class="a" style="left:472px;top:865px;width:2px;height:2px;background:#333"></div>
<div class="a" style="left:489px;top:851px;width:274px;height:17px;background:#f6f6f6;border-radius:8px"></div>
<svg class="a" style="left:493px;top:855px" width="7" height="10" viewBox="0 0 7 10"><path d="M7 0V10L0 5z" fill="#666"/></svg>
<div class="a" style="left:572px;top:855px;width:28px;height:10px;background:#6e6e6e;border-radius:5px"></div>
<svg class="a" style="left:751px;top:855px" width="7" height="10" viewBox="0 0 7 10"><path d="M0 0V10L7 5z" fill="#666"/></svg>
<div class="a" style="left:0;top:877px;width:1600px;height:21px;background:#f3f3f3;border-top:1px solid #e6e6e6"></div>
<div class="t" style="left:12px;top:883px;font-size:11px;color:#333;--k:0.9624">Ready</div>
<svg class="a" style="left:0;top:0" width="100" height="900" viewBox="0 0 100 900"><g fill="none" stroke="#1f1f1f" stroke-width="1" stroke-linecap="round"><circle cx="68" cy="882.7" r="1.6"/><path d="M62.4 884.3c1.6 1.3 3 1.7 4.3 1.7h2.7c1.3 0 2.7-.4 4.1-1.6M66.7 886c0 2.6-.7 5.2-2.1 8.4M69.3 886v2.3"/><path d="M70.4 888.8l4.8 5.4M75.2 888.8l-4.8 5.4"/></g></svg>
<div class="t" style="left:80px;top:883px;font-size:11px;font-weight:bold;color:#333;--k:0.9555">Accessibility: Investigate</div>
<div class="a" style="left:1297px;top:878px;width:40px;height:20px;background:#e0e0e0"></div>
<svg class="a" style="left:0;top:0" width="1600" height="900" viewBox="0 0 1600 900"><g fill="none" stroke="#1f1f1f" stroke-width="1.1"><path d="M1310.6 881.6h11.8v11.8h-11.8zM1310.6 885.5h11.8M1310.6 889.5h11.8M1314.5 881.6v11.8M1318.5 881.6v11.8"/><path d="M1350.6 881.6h13v12h-13zM1353.3 884.2h7.6v6.8h-7.6zM1355 886h4.2M1355 887.7h4.2M1355 889.3h4.2"/><path d="M1390.6 881.6h13v12h-13zM1390.6 888.5h7.7v-6.9M1394.3 881.6v6.9"/></g></svg>
<div class="a" style="left:1423px;top:887px;width:8px;height:1px;background:#333"></div>
<div class="a" style="left:1436px;top:887px;width:100px;height:1px;background:#777"></div>
<div class="a" style="left:1484px;top:883px;width:5px;height:11px;background:#666"></div>
<svg class="a" style="left:1541px;top:883px" width="10" height="10" viewBox="0 0 10 10"><path d="M5 0v10M0 5h10" stroke="#333" stroke-width="1"/></svg>
<div class="t" style="left:1562px;top:883px;font-size:11px;color:#333;--k:0.9614">100 %</div>
<div class="a" style="left:0;top:898px;width:1600px;height:2px;background:#3a3a3a"></div>
<div class="a" style="left:48px;top:898px;width:288px;height:2px;background:#c4c4c4"></div>
<div class="a" style="left:583px;top:898px;width:48px;height:2px;background:#6a6a6a"></div>
<!-- PANE -->
<div class="t" style="left:798px;top:235px;font-size:15px;color:#242424;--k:1.0367">cobby</div>
<svg class="a" style="left:1536px;top:238px" width="15" height="9" viewBox="0 0 15 9"><path d="M1 1l6.5 6.5L14 1" fill="none" stroke="#333" stroke-width="1.1"/></svg>
<svg class="a" style="left:1570px;top:236px" width="12" height="12" viewBox="0 0 12 12"><path d="M1 1l10 10M11 1L1 11" stroke="#333" stroke-width="1.1"/></svg>
<div class="a" style="left:798px;top:261px;width:788px;height:601px;background:#fff;border:1px solid #dadada;border-top:none"></div>
<div class="a" style="left:799px;top:262px;width:786px;height:48px;background:#005fb3"></div>
<svg class="a" style="left:818px;top:272px" width="28" height="28" viewBox="0 0 28 28">
  <path d="M14 4.5 A9.5 9.5 0 1 0 23.5 14" fill="none" stroke="#fff" stroke-width="5"/>
  <path d="M11.8 16.2 L20 8" stroke="#0aa3e0" stroke-width="3" stroke-linecap="round"/>
  <path d="M15 2 H26 V13 Z" fill="#0aa3e0"/>
</svg>
<svg class="a" style="left:861px;top:275px" width="22" height="22" viewBox="0 0 22 22"><path d="M11 1.5v12M6 9l5 5 5-5M2 14v4.5a1.5 1.5 0 0 0 1.5 1.5h15a1.5 1.5 0 0 0 1.5-1.5V14" fill="none" stroke="#fff" stroke-width="2.2" stroke-linecap="round" stroke-linejoin="round"/></svg>
<svg class="a" style="left:901px;top:275px" width="22" height="22" viewBox="0 0 22 22"><path d="M11 14V2M6 7l5-5 5 5M2 14v4.5a1.5 1.5 0 0 0 1.5 1.5h15a1.5 1.5 0 0 0 1.5-1.5V14" fill="none" stroke="#fff" stroke-width="2.2" stroke-linecap="round" stroke-linejoin="round"/></svg>
<div class="a" style="left:950px;top:277px;width:5px;height:5px;border-radius:50%;background:#fff"></div>
<div class="a" style="left:950px;top:284px;width:5px;height:5px;border-radius:50%;background:#fff"></div>
<div class="a" style="left:950px;top:291px;width:5px;height:5px;border-radius:50%;background:#fff"></div>
<svg class="a" style="left:1541px;top:275px" width="23" height="22" viewBox="0 0 23 22"><path d="M8 2H3.5a1.5 1.5 0 0 0-1.5 1.5v15A1.5 1.5 0 0 0 3.5 20H8M8 11h12.5M15.5 6l5 5-5 5" fill="none" stroke="#fff" stroke-width="2" stroke-linecap="round" stroke-linejoin="round"/></svg>
<div class="a" style="left:799px;top:310px;width:786px;height:30px;background:#e4e7eb"></div>
<div class="t" style="left:816px;top:318px;font-size:13px;color:#242424;--k:0.9286">Startseite</div>
<div class="t" style="left:888px;top:318px;font-size:13px;color:#0db1ee;--k:0.9273">Editor</div>
<div class="a" style="left:879px;top:338px;width:49px;height:2px;background:#0db1ee"></div>
<div class="t" style="left:940px;top:318px;font-size:13px;color:#242424;--k:0.8737">Jobs</div>
<div class="a" style="left:808px;top:340px;width:768px;height:27px;background:#f3f3f3"></div>
<div class="a" style="left:811px;top:343px;width:15px;height:15px;background:#d7e6dc"></div>
<div class="a" style="left:826px;top:343px;width:15px;height:15px;background:#d3e3d8"></div>
<div class="a" style="left:841px;top:343px;width:15px;height:15px;background:#cfe0d4"></div>
<div class="a" style="left:856px;top:343px;width:15px;height:15px;background:#d6e4db"></div>
<div class="a" style="left:871px;top:343px;width:15px;height:15px;background:#d2e2d7"></div>
<div class="a" style="left:886px;top:343px;width:14px;height:15px;background:#e0eae3"></div>
<div class="a" style="left:811px;top:358px;width:89px;height:7px;background:#e0ebe3"></div>
<div class="a" style="left:1524px;top:342px;width:15px;height:15px;background:#dcebe0"></div>
<div class="a" style="left:1539px;top:342px;width:15px;height:15px;background:#4bbd7c"></div>
<div class="a" style="left:1554px;top:342px;width:15px;height:15px;background:#dcede1"></div>
<div class="a" style="left:1524px;top:357px;width:15px;height:8px;background:#e9f2eb"></div>
<div class="a" style="left:1539px;top:357px;width:15px;height:8px;background:#62c48e"></div>
<div class="a" style="left:1554px;top:357px;width:15px;height:8px;background:#dcede1"></div>
<!-- description title -->
<svg class="a" style="left:834px;top:383px" width="20" height="24" viewBox="0 0 20 24"><path d="M2.5 3a1.5 1.5 0 0 1 1.5-1.5h8.5l5.5 5.5v14a1.5 1.5 0 0 1-1.5 1.5H4a1.5 1.5 0 0 1-1.5-1.5z M12.5 1.5v5.5H18 M6 11h3 M6 15h8 M6 18.5h8" fill="none" stroke="#111" stroke-width="2" stroke-linejoin="round"/></svg>
<div class="t" style="left:862.5px;top:387px;font-size:15.5px;color:#111;-webkit-text-stroke:.45px #111;--k:1.0527">Description (HTML-Editor)</div>
<!-- editor box -->
<div class="a" style="left:833px;top:427px;width:718px;height:399px;border:2px solid #e8e8e8;border-radius:10px;background:#fff"></div>
<div class="a" style="left:835px;top:477px;width:714px;height:6px;background:linear-gradient(rgba(0,0,0,.07),rgba(0,0,0,0))"></div>
<div class="a" style="left:846px;top:440px;width:130px;height:28px;background:#f4f4f4;border-radius:4px"></div>
<div class="t" style="left:854.5px;top:447px;font-size:14px;color:#222f3e;--k:0.9481">Paragraph</div>
<div class="a" style="left:1052px;top:440px;width:34px;height:28px;background:#a0cdf5;border-radius:3px"></div>
<div class="a" style="left:1470px;top:437px;width:39px;height:33px;border:3.8px solid #e81f25;border-radius:6px;background:#a0cdf5"></div>
<svg class="a" style="left:0;top:0" width="1600" height="900" viewBox="0 0 1600 900">
<g fill="none" stroke="#7b8288" stroke-width="1.5" stroke-linecap="round" stroke-linejoin="round">
<path d="M959.5 451l4.3 4.3 4.3-4.3"/><path d="M1038.5 451.5l4.3 4.3 4.3-4.3"/></g>
<g fill="none" stroke="#1b2533" stroke-width="1.9" stroke-linecap="round" stroke-linejoin="round">
<path d="M1014.2 457.3L1018 448.4l3.8 8.9M1015.6 454.2h4.8"/>
<path d="M1065 447.9v12.3h5.2c2.1 0 3.6-1.2 3.6-3.3c0-2-1.5-3.2-3.6-3.2H1065M1065 453.7h4.6c1.8 0 3-1 3-2.9c0-1.9-1.2-2.9-3-2.9H1065" stroke-width="2.4"/>
<path d="M1103.5 447.8h5M1099.8 460.6h5M1106.2 447.8L1102.4 460.6" stroke-width="1.5" stroke-linecap="butt"/>
<path d="M1135 447.6v6.2a4 4 0 0 0 8 0v-6.2"/>
<path d="M1202.6 449.6c-.8-1.4-2.2-2.2-4.3-2.2c-2.6 0-4.3 1.3-4.3 3.2c0 2 1.7 2.8 4.4 3.4c3 .7 4.6 1.6 4.6 3.7c0 2-1.9 3.1-4.6 3.1c-2.3 0-3.9-.9-4.8-2.4"/>
<path d="M1190.3 454H1205.6" stroke-width="2.1"/>
<path d="M1224.8 450.8l10.4 10.4M1235.2 450.8l-10.4 10.4" stroke-width="2.1" stroke-linecap="butt"/>
<path d="M1259.9 446.6l10.4 10.4M1270.3 446.6l-10.4 10.4" stroke-width="2.1" stroke-linecap="butt"/>
<path d="M1320.2 447.8h13.7M1320.2 451.9h7.6M1320.2 456h13.7M1320.2 459.9h7.6" stroke-width="2"/>
<path d="M1355.2 447.8h13.7M1361.1 451.9h7.8M1355.2 456h13.7M1361.1 459.9h7.8" stroke-width="2"/>
<path d="M1390.2 447.8h13.7M1390.2 451.9h13.7M1390.2 456h13.7M1390.2 459.9h13.7" stroke-width="2"/>
<path d="M1425.2 447.8h13.7M1428 451.9h8M1425.2 456h13.7M1428 459.9h8" stroke-width="2"/>
</g>
<rect x="1009" y="460.1" width="18" height="2.7" fill="#000"/>
<text x="1236.2" y="453.4" font-family="Liberation Sans" font-weight="bold" font-size="9.5" fill="#1b2533">2</text>
<text x="1271.6" y="461.6" font-family="Liberation Sans" font-weight="bold" font-size="9.5" fill="#1b2533">2</text>
<circle cx="1483.5" cy="453.8" r="1.9" fill="#1b2533"/><circle cx="1489.5" cy="453.8" r="1.9" fill="#1b2533"/><circle cx="1495.5" cy="453.8" r="1.9" fill="#1b2533"/>
</svg>
<!-- badge 1 -->
<div class="a" style="left:1472px;top:395px;width:36px;height:36px;border-radius:50%;background:#ee3a3f;box-shadow:0 1px 2px rgba(0,0,0,.45)"></div>
<div class="t" style="left:1472px;top:401px;width:36px;text-align:center;font-size:24px;font-weight:bold;color:#fff">1</div>

<!-- content -->
<div class="a" style="left:835px;top:478px;width:700px;height:322px;overflow:hidden">
<svg class="a" style="left:0;top:0" width="80" height="40" viewBox="835 478 80 40"><path d="M858.3 486.6h5.4l1.6 1.6 3.2 1.4a1 1 0 0 1 .6.9v14.6l-3.6-.3c-1.4 1.4-2.8 1.9-4.4 1.9s-3-.5-4.4-1.9l-3.7.3V490.5a1 1 0 0 1 .6-.9l3.1-1.4z" fill="#2e2e2e" stroke="#0a0a0a" stroke-width="1.2" stroke-linejoin="round"/><path d="M858.4 487.6l2.6 5.2 2.6-5.2M861 492.8v13.3M855.8 491v13M866.2 491v13" fill="none" stroke="#111" stroke-width=".8"/><g fill="#6a6a6a"><rect x="859.3" y="496.3" width="1.3" height="1"/><rect x="861.5" y="496.3" width="1.3" height="1"/><rect x="859.3" y="498.8" width="1.3" height="1"/><rect x="861.5" y="498.8" width="1.3" height="1"/><rect x="859.3" y="501.6" width="1.3" height="1"/><rect x="861.5" y="501.6" width="1.3" height="1"/></g></svg>
<div class="t" style="left:42.5px;top:10px;font-size:18px;font-weight:bold;color:#000;text-decoration:underline;text-decoration-thickness:1.4px;text-underline-offset:1px;--k:1.085">Women`s Premium All-Weather Jacket</div>
</div>
<div class="a" style="left:850px;top:529px;width:669px;font-size:16px;line-height:22.27px;color:#000">
<div style="text-align:justify;text-align-last:justify;white-space:nowrap">Experience ultimate comfort and style with this versatile women's jacket, designed for the</div>
<div style="text-align:justify;text-align-last:justify;white-space:nowrap">modern professional. Crafted from high-quality, <b>water-resistant</b> material, it keeps you dry</div>
<div style="text-align:justify;text-align-last:justify;white-space:nowrap">during unexpected showers while maintaining breathability. The sleek design features a full-</div>
<div style="text-align:justify;text-align-last:justify;white-space:nowrap">length zipper, adjustable cuffs, and multiple interior pockets for secure storage of your</div>
<div style="text-align:justify;text-align-last:justify;white-space:nowrap">essentials. The <b>flattering fit</b> complements any outfit, whether you're heading to the office or</div>
<div style="text-align:justify;text-align-last:justify;white-space:nowrap">exploring the outdoors. The durable construction ensures long-lasting wear, making this jacket</div>
<div style="white-space:nowrap">an essential addition to your wardrobe for all seasons.</div>
</div>
<svg class="a" style="left:0;top:0" width="900" height="730" viewBox="0 0 900 730"><path d="M863.5 703.3c.7 4.6 2 6.4 6.3 7.4-4.3 1-5.6 2.8-6.3 8.6-.7-5.8-2-7.6-6.3-8.6 4.3-1 5.6-2.8 6.3-7.4z" fill="#fbd433" stroke="#111" stroke-width="1.1" stroke-linejoin="round"/><path d="M855.3 705.3c.4 2.2 1 2.9 2.9 3.3-1.9.4-2.5 1.1-2.9 3.5-.4-2.4-1-3.1-2.9-3.5 1.9-.4 2.5-1.1 2.9-3.3z" fill="#35c4ef" stroke="#111" stroke-width=".8" stroke-linejoin="round"/><path d="M858.6 713.4c.4 2 .9 2.6 2.7 3-1.8.4-2.3 1-2.7 3.3-.4-2.3-.9-2.9-2.7-3.3 1.8-.4 2.3-1 2.7-3z" fill="#f27fb2" stroke="#111" stroke-width=".8" stroke-linejoin="round"/></svg>
<div class="t" style="left:876.8px;top:703px;font-size:15px;font-weight:bold;color:#000;--k:0.9998">Key Features:</div>
<div class="a" style="left:872px;top:748px;width:6px;height:6px;border-radius:50%;background:#000"></div>
<div class="t" style="left:890px;top:742.2px;font-size:16px;color:#000;--k:1.0125">high-quality, water-resistant material</div>
<div class="a" style="left:872px;top:770px;width:6px;height:6px;border-radius:50%;background:#000"></div>
<div class="t" style="left:890px;top:764.2px;font-size:16px;color:#000;--k:1.0349">full-length zipper</div>


<!-- editor scrollbar -->
<div class="a" style="left:1535px;top:480px;width:15px;height:320px;background:#f8f8f8"></div>
<svg class="a" style="left:1537px;top:483px" width="10" height="6" viewBox="0 0 10 6"><path d="M5 0L10 6H0z" fill="#888"/></svg>
<div class="a" style="left:1538px;top:527px;width:9px;height:255px;background:#878787;border-radius:5px"></div>
<svg class="a" style="left:1537px;top:787px" width="10" height="6" viewBox="0 0 10 6"><path d="M0 0H10L5 6z" fill="#888"/></svg>
<!-- popup toolbar -->
<div class="a" style="left:1203px;top:468px;width:305px;height:47px;background:#fff;border-radius:6px;box-shadow:0 3px 5px rgba(0,0,0,.12), 0 0 1px rgba(0,0,0,.2)"></div>
<div class="a" style="left:1459px;top:475px;width:39px;height:34px;border:3.8px solid #e81f25;border-radius:6px;background:#c6e3fa"></div>
<svg class="a" style="left:0;top:0" width="1600" height="900" viewBox="0 0 1600 900">
<g fill="#1b2533"><circle cx="1226" cy="486" r="1.5"/><circle cx="1226" cy="492" r="1.5"/><circle cx="1226" cy="498" r="1.5"/></g>
<g fill="none" stroke="#1b2533" stroke-width="2" stroke-linecap="round" stroke-linejoin="round">
<path d="M1231 486h8M1231 492h8M1231 498h8M1265.2 486h8M1265.2 492h8M1265.2 498h8"/>
<path d="M1259.4 484.6l1.6-.8v4.4M1259.3 490.3h2.2l-2.2 3.3h2.4M1259.3 496h2.3l-1.2 1.5c1 0 1.3.4 1.3 1s-.5 1-1.2 1h-1.2" stroke-width="1.1" stroke-linecap="butt"/>
<path d="M1321.5 490.5l-3.2 3.2a3 3 0 0 0 4.3 4.3l4.4-4.4a2.2 2.2 0 0 0 0-3M1330.8 493.4l3.2-3.2a3 3 0 0 0-4.3-4.3l-4.4 4.4a2.2 2.2 0 0 0 0 3"/>
<path d="M1382 484l-5 4.9 5 5M1377.2 488.9h6.2c3.2 0 5.6 2 5.6 5.2c0 2.5-.8 4.2-1.2 5"/>
<path d="M1422.6 484l5 4.9-5 5M1427.4 488.9h-6.2c-3.2 0-5.6 2-5.6 5.2c0 2.5.8 4.2 1.2 5" stroke="#8d969e"/>
<path d="M1476.4 487.3l-5 4.7 5 4.7M1481.8 487.3l5 4.7-5 4.7" stroke-width="1.9"/>
</g>
</svg>
<!-- tooltip -->
<div class="a" style="left:1498px;top:502px;width:82px;height:25px;background:#fff;border:1px solid #222"></div>
<div class="t" style="left:1506.5px;top:508px;font-size:12px;color:#222;--k:0.9571">Source code</div>
<!-- badge 2 -->
<div class="a" style="left:1460px;top:515px;width:36px;height:36px;border-radius:50%;background:#ee3a3f;box-shadow:0 1px 2px rgba(0,0,0,.45)"></div>
<div class="t" style="left:1460.5px;top:521px;width:36px;text-align:center;font-size:24px;font-weight:bold;color:#fff">2</div>

<!-- statusbar -->
<div class="a" style="left:835px;top:800px;width:714px;height:1px;background:#e3e3e3"></div>
<div class="t" style="left:842.7px;top:807px;font-size:13px;color:#70757a;--k:1.0815">p › strong</div>
<svg class="a" style="left:0;top:0" width="1600" height="900" viewBox="0 0 1600 900"><rect x="1492.2" y="804.2" width="15.3" height="15.3" rx="5" fill="#3d4d5c"/><path d="M1495.6 810.8l3.4-.5v-2.2l5.1-.7v6.2l-3.4.5v2.3l-5.1.7z" fill="#fff"/><rect x="1498.2" y="810.6" width="2.9" height="3.2" fill="#3d4d5c"/></svg>
<div class="t" style="left:1511.4px;top:804px;font-size:16px;font-weight:bold;color:#3d4d5c;--k:1.0403">tiny</div>
<!-- button -->
<div class="a" style="left:1437px;top:839px;width:115px;height:23px;background:#005fb3;border-radius:8px 8px 0 0"></div>
<div class="t" style="left:1454px;top:850px;font-size:13px;font-weight:bold;color:#fff;--k:1.0344">Übernehmen</div>

</body></html>
